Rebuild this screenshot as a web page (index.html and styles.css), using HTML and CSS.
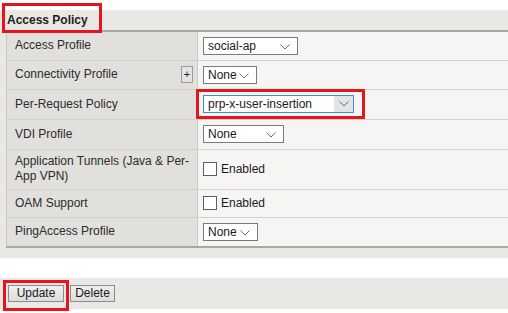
FILE: index.html
```html
<!DOCTYPE html>
<html>
<head>
<meta charset="utf-8">
<link rel="stylesheet" href="styles.css">
</head>
<body>
<div class="panel">
  <div class="title">Access Policy</div>
  <table class="props">
    <tr class="row">
      <td class="label">Access Profile</td>
      <td class="value"><div class="sel w95"><span>social-ap</span><svg class="chev" width="10" height="6" viewBox="0 0 10 6"><path d="M0.5 0.5 L5 5 L9.5 0.5" fill="none" stroke="#6e6e6e" stroke-width="1"/></svg></div></td>
    </tr>
    <tr class="row">
      <td class="label"><div class="labflex"><span>Connectivity Profile</span><span class="plus">+</span></div></td>
      <td class="value"><div class="sel w54"><span>None</span><svg class="chev" width="10" height="6" viewBox="0 0 10 6"><path d="M0.5 0.5 L5 5 L9.5 0.5" fill="none" stroke="#6e6e6e" stroke-width="1"/></svg></div></td>
    </tr>
    <tr class="row r30">
      <td class="label">Per-Request Policy</td>
      <td class="value"><div class="sel w151 focus"><span>prp-x-user-insertion</span><span class="arrowbox"><svg width="10" height="6" viewBox="0 0 10 6"><path d="M0.5 0.5 L5 5 L9.5 0.5" fill="none" stroke="#6e6e6e" stroke-width="1"/></svg></span></div></td>
    </tr>
    <tr class="row r30">
      <td class="label">VDI Profile</td>
      <td class="value"><div class="sel w81"><span>None</span><svg class="chev" width="10" height="6" viewBox="0 0 10 6"><path d="M0.5 0.5 L5 5 L9.5 0.5" fill="none" stroke="#6e6e6e" stroke-width="1"/></svg></div></td>
    </tr>
    <tr class="row r40">
      <td class="label">Application Tunnels (Java &amp; Per-<br>App VPN)</td>
      <td class="value"><label class="chk"><span class="box"></span>Enabled</label></td>
    </tr>
    <tr class="row r28">
      <td class="label">OAM Support</td>
      <td class="value"><label class="chk"><span class="box"></span>Enabled</label></td>
    </tr>
    <tr class="row r30 last">
      <td class="label">PingAccess Profile</td>
      <td class="value"><div class="sel w55"><span>None</span><svg class="chev" width="10" height="6" viewBox="0 0 10 6"><path d="M0.5 0.5 L5 5 L9.5 0.5" fill="none" stroke="#6e6e6e" stroke-width="1"/></svg></div></td>
    </tr>
  </table>
</div>
<div class="bar">
  <button class="btn w56">Update</button>
  <button class="btn w45">Delete</button>
</div>
<div class="mark m1"></div>
<div class="mark m2"></div>
<div class="mark m3"></div>
</body>
</html>
```
FILE: styles.css
```css
html, body {
  margin: 0;
  padding: 0;
  background: #ffffff;
  font-family: "Liberation Sans", Arial, sans-serif;
  font-size: 12px;
  color: #2b2b2b;
}
body {
  position: relative;
  width: 508px;
  height: 313px;
  overflow: hidden;
}
.panel {
  margin-top: 10px;
  background: #e9e8e5;
  padding-bottom: 10px;
}
.title {
  height: 20px;
  line-height: 20px;
  padding-left: 7px;
  font-weight: bold;
  font-size: 12px;
  color: #1e1e1e;
}
.props {
  margin-left: 6px;
  width: 502px;
  border-collapse: collapse;
  border-top: 2px solid #a9a8a6;
  border-left: 1px solid #c9c8c5;
}
.row {
  height: 29px;
}
.r30 { height: 30px; }
.r40 { height: 40px; }
.r28 { height: 28px; }
.row td {
  border-bottom: 1px solid #d2d1ce;
  padding: 0;
  vertical-align: middle;
}
.row.last td {
  border-bottom: 2px solid #a9a8a6;
}
.label {
  width: 182px;
  background: #e1e0dd;
  padding-left: 8px !important;
  padding-right: 0 !important;
  border-right: 1px solid #c9c8c5;
  line-height: 15px;
}
.labflex {
  display: flex;
  align-items: center;
  justify-content: space-between;
  padding-right: 4px;
}
.plus {
  width: 10px;
  height: 15px;
  line-height: 15px;
  text-align: center;
  border: 1px solid #9a9a9a;
  background: #e4e4e4;
  font-size: 11px;
  color: #222;
}
.value {
  background: #f6f5f3;
  padding-left: 5px !important;
}
.sel {
  position: relative;
  height: 16px;
  border: 1px solid #7a7a7a;
  background: #ffffff;
  display: flex;
  align-items: center;
  padding-left: 4px;
  box-sizing: content-box;
  color: #1a1a1a;
  font-size: 12px;
  line-height: 16px;
}
.sel .chev {
  position: absolute;
  right: 7px;
  top: 6px;
}
.w95 { width: 89px; }
.w54 { width: 48px; }
.w55 { width: 49px; }
.w81 { width: 75px; }
.w151 { width: 145px; }
.focus {
  border-color: #3d8fd6;
}
.arrowbox {
  position: absolute;
  right: 0;
  top: 0;
  width: 19px;
  height: 16px;
  background: #e3e3e3;
  display: flex;
  align-items: center;
  justify-content: center;
}
.chk {
  display: flex;
  align-items: center;
  color: #1a1a1a;
}
.box {
  width: 12px;
  height: 12px;
  border: 1px solid #5e5e5e;
  background: #fff;
  margin-right: 4px;
}
.bar {
  margin-top: 20px;
  height: 31px;
  background: #e9e8e5;
  display: flex;
  align-items: center;
  gap: 6px;
  padding-left: 8px;
}
.btn {
  height: 17px;
  padding: 0;
  border: 1px solid #8c8c8c;
  background: linear-gradient(#f0f0f0, #dcdcdc);
  font-family: "Liberation Sans", Arial, sans-serif;
  font-size: 12px;
  color: #1a1a1a;
  line-height: 15px;
}
.w56 { width: 56px; }
.w45 { width: 45px; }
.mark {
  position: absolute;
  border: 3px solid #e8141b;
  box-sizing: border-box;
}
.m1 { left: 2px; top: 3px; width: 100px; height: 30px; }
.m2 { left: 196px; top: 89px; width: 169px; height: 30px; }
.m3 { left: 3px; top: 280px; width: 66px; height: 31px; }
```
